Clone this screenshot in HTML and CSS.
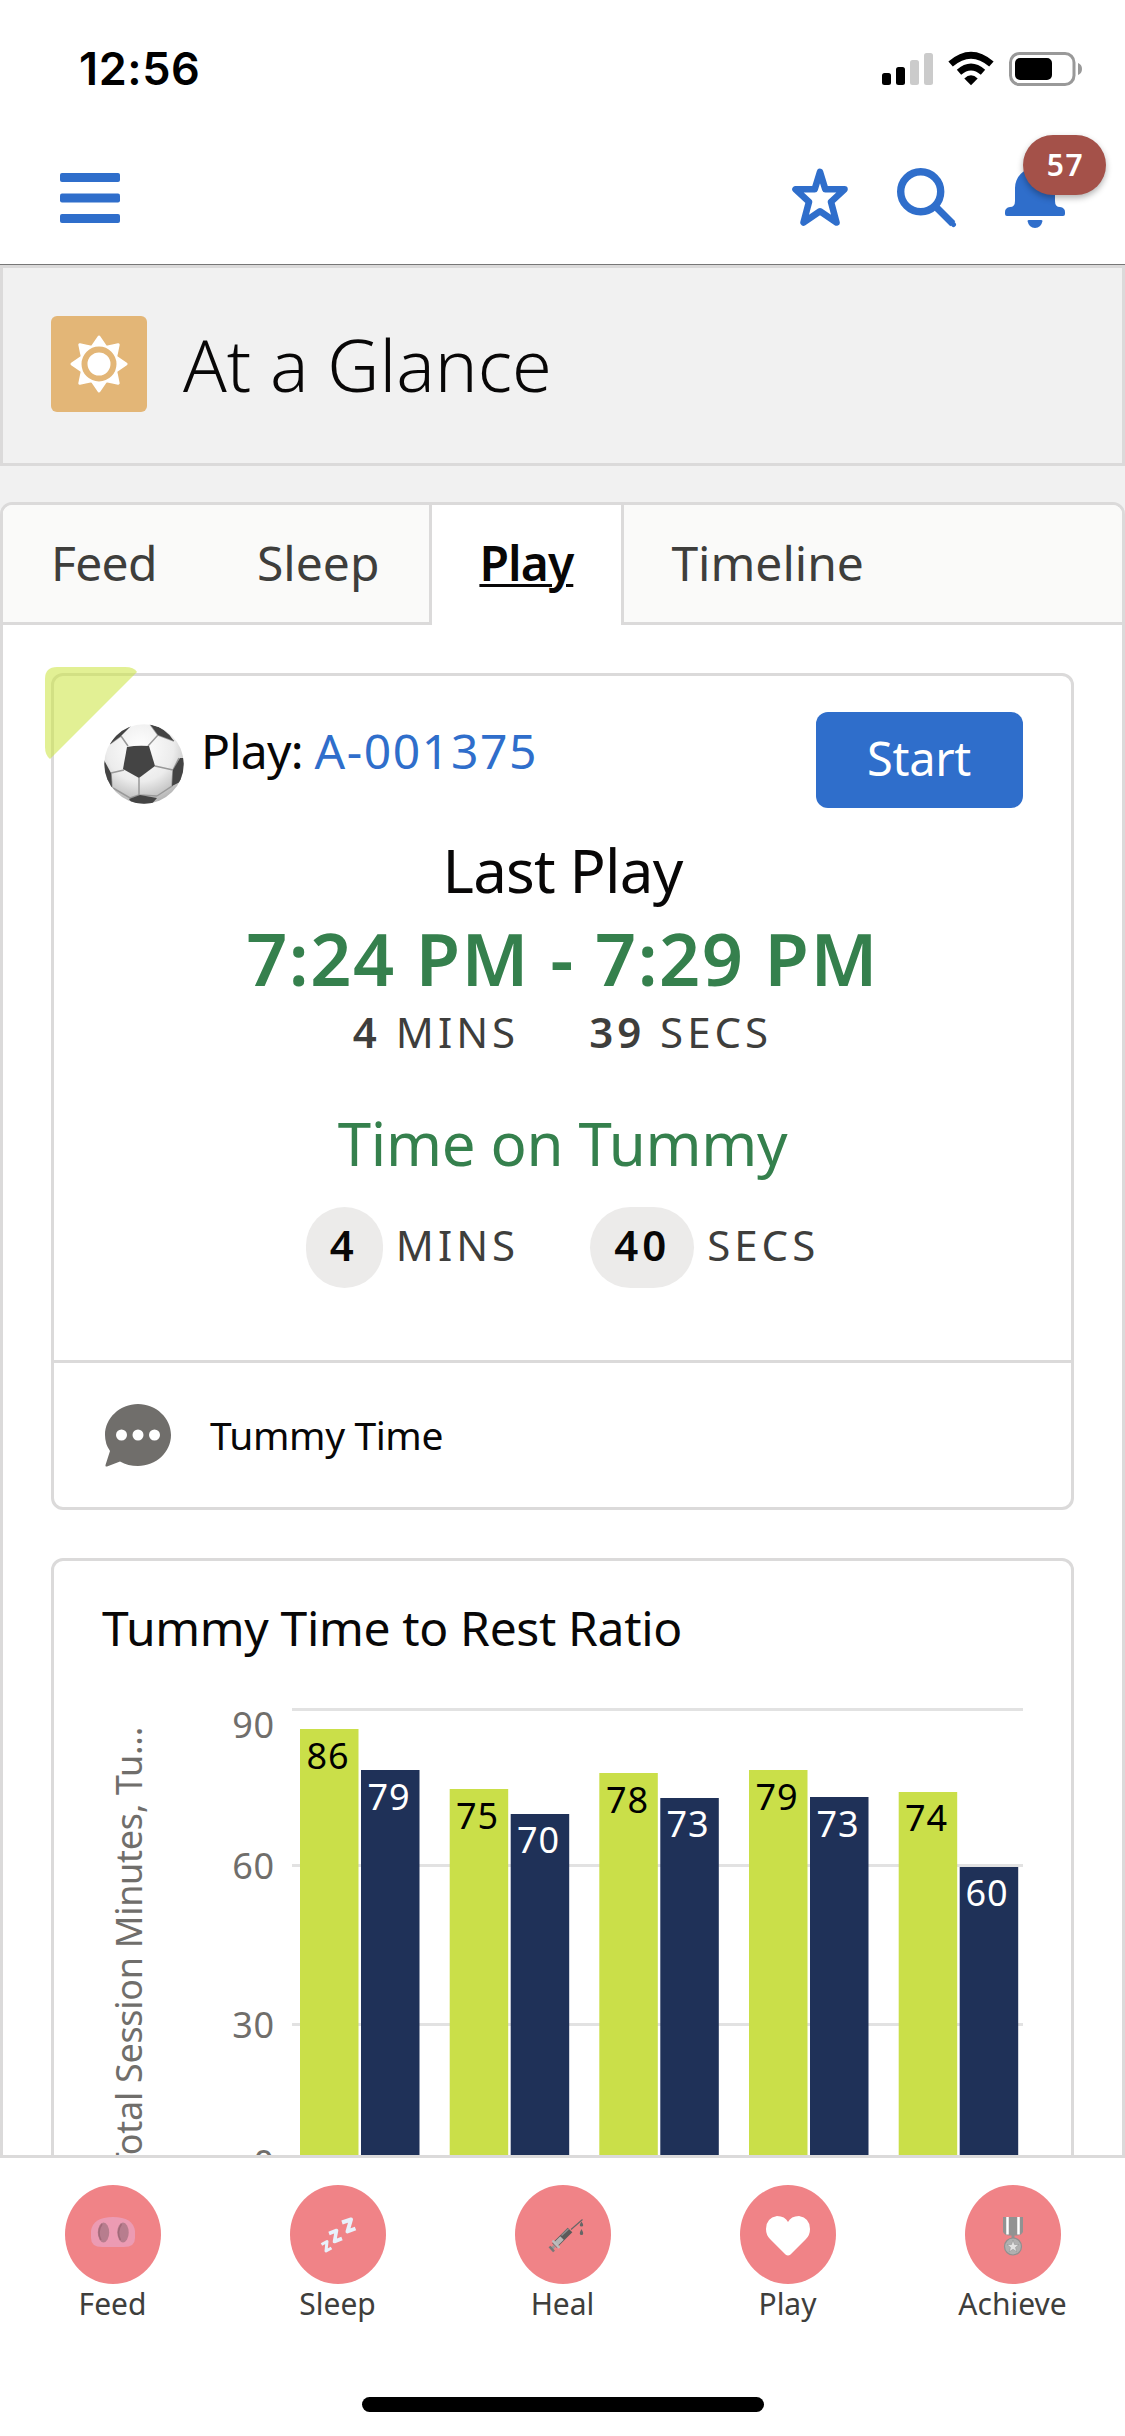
FILE: index.html
```html
<!DOCTYPE html>
<html lang="en">
<head>
<meta charset="utf-8">
<title>At a Glance</title>
<link rel="stylesheet" href="styles.css">
</head>
<body>
<div class="status">
  <span class="clock">12:56</span>
  <svg class="status-icons" width="202" height="36" viewBox="0 0 202 36">
    <rect x="1" y="22" width="9" height="12" rx="2.5"/>
    <rect x="15" y="16" width="9" height="18" rx="2.5"/>
    <g fill="#cbcbcb"><rect x="29" y="9" width="9" height="25" rx="2.5"/><rect x="43" y="2" width="9" height="32" rx="2.5"/></g>
    <path d="M90 34.2L83.3 27.4Q90 21.3 96.700 27.400Z"/>
    <path d="M78 21.300Q90 10.800 102 21.300" fill="none" stroke="#000" stroke-width="6.600"/>
    <path d="M69.600 13Q90 -4.600 110.400 13" fill="none" stroke="#000" stroke-width="6.800"/>
    <rect x="129.500" y="2.500" width="63.500" height="31" rx="9" fill="none" stroke="#999" stroke-width="3"/>
    <rect x="134" y="7" width="37" height="22" rx="5"/>
    <path d="M197 12q4 1.500 4 6t-4 6z" fill="#999"/>
  </svg>
</div>
<nav class="topbar">
  <svg width="60" height="50" viewBox="0 0 60 50" fill="#2f6ecb"><rect width="60" height="9" rx="2"/><rect y="20.500" width="60" height="9" rx="2"/><rect y="41" width="60" height="9" rx="2"/></svg>
  <div class="actions">
    <svg width="60" height="60" viewBox="0 0 60 60"><path d="M30 4L35.300 21.300L54.500 21.300L41 33.800L46.500 54.500L30 43.300L13.500 54.500L19 33.800L5.500 21.300L24.700 21.300Z" fill="none" stroke="#2f6ecb" stroke-width="6.600" stroke-linejoin="round" transform="translate(1 0)"/></svg>
    <svg width="60" height="60" viewBox="0 0 60 60" fill="none" stroke="#2f6ecb"><circle cx="23.700" cy="23.700" r="20" stroke-width="7.400"/><path d="M38 38L55.800 55.800" stroke-width="7"/><path d="M55 55L56.500 56.500" stroke-width="5" stroke-linecap="round"/></svg>
    <div class="bell">
      <svg width="60" height="60" viewBox="0 0 60 60" fill="#2f6ecb"><path d="M10 20a20 20 0 0 1 40 0V33Q50 39 55 39Q60 39.800 60 44V46Q60 48 58 48H2Q0 48 0 46V44Q0 39.800 5 39Q10 39 10 33Z"/><path d="M24 52H36Q37.500 52 37.500 53Q36 60 30 60T22.500 53Q22.500 52 24 52Z"/></svg>
      <span class="badge">57</span>
    </div>
  </div>
</nav>
<main class="content">
  <header class="page-head">
    <span class="head-icon">
      <svg width="58" height="58" viewBox="-29 -29 58 58"><path fill="#fff" stroke="#fff" stroke-width="3" stroke-linejoin="round" d="M0 -27L6.500 -17.500Q8 -16.500 10 -17.300L19.200 -19.200L17.300 -10Q16.500 -8 17.500 -6.500L27 0L17.500 6.500Q16.500 8 17.300 10L19.200 19.200L10 17.300Q8 16.500 6.500 17.500L0 27L-6.500 17.500Q-8 16.500 -10 17.300L-19.200 19.200L-17.300 10Q-16.500 8 -17.500 6.500L-27 0L-17.500 -6.500Q-16.500 -8 -17.300 -10L-19.200 -19.200L-10 -17.300Q-8 -16.500 -6.500 -17.500Z"/><circle r="14.500" fill="none" stroke="#e3b677" stroke-width="6"/></svg>
    </span>
    <h1>At a Glance</h1>
  </header>
  <section class="panel">
    <div class="tabs">
      <span class="tab feed">Feed</span><span class="tab">Sleep</span><span class="tab active">Play</span><span class="tab">Timeline</span>
    </div>
    <div class="cards">
      <article class="card play-card">
        <svg class="corner" width="92" height="92" viewBox="0 0 92 92"><path d="M0 12Q0 0 12 0H80Q89 0 92 5L5 92Q0 88 0 80Z" fill="#cce543" fill-opacity=".57"/></svg>
        <div class="play-head">
          <svg class="ball" width="80" height="80" viewBox="0 0 80 80">
            <defs><radialGradient id="shade" cx=".45" cy=".3" r=".7"><stop offset="0" stop-color="#fff"/><stop offset=".6" stop-color="#ececec"/><stop offset="1" stop-color="#b5b5b5"/></radialGradient><clipPath id="round"><circle cx="40" cy="40" r="39.700"/></clipPath></defs>
            <g clip-path="url(#round)">
              <rect width="80" height="80" fill="url(#shade)"/>
              <g fill="none" stroke="#999" stroke-width="1.500"><path d="M24 22L17 12M44 22L54 11L46 0M51 42L69 46M35 54V71M20 46L7 49M54 11L70 17M17 12L6 20M7 49L8 64M69 46L68 62L53 72M69 46L75 34M35 71L26 74L9 64M35 71L53 72"/></g>
              <g fill="#444"><path d="M23 23Q33 21 45 22L51 42L35 54L19 45Z"/><path d="M46 0Q62 4 70 17L54 11Z"/><path d="M28 1Q13 6 6 20L17 12Z"/><path d="M0 36L7 49L8 64L-2 55Z"/><path d="M76 34L69 46L68 62L82 55V34Z"/><path d="M25 75L36 71L53 74L46 82H30Z"/></g>
            </g>
          </svg>
          <span class="play-name">Play: <a>A-001375</a></span>
          <button class="start">Start</button>
        </div>
        <div class="last">Last Play</div>
        <div class="range">7:24 PM - 7:29 PM</div>
        <div class="span-row"><span><b>4</b> MINS</span><span><b>39</b> SECS</span></div>
        <div class="tummy">Time on Tummy</div>
        <div class="span-row pills"><span><b>4</b>MINS</span><span><b>40</b>SECS</span></div>
        <div class="note">
          <svg width="66" height="63" viewBox="0 0 66 63"><path fill="#706e6b" d="M33 0C51 0 66 14 66 31S51 62 33 62Q23 62 15 57.500L2 62.500Q0 63 .5 61L5 47Q0 40 0 31C0 14 15 0 33 0Z"/><g fill="#fff"><circle cx="16.500" cy="31" r="5.500"/><circle cx="33" cy="31" r="5.500"/><circle cx="49.500" cy="31" r="5.500"/></g></svg>
          <span>Tummy Time</span>
        </div>
      </article>
      <article class="card">
        <h2>Tummy Time to Rest Ratio</h2>
        <svg class="chart" width="1017" height="560" viewBox="0 0 1017 560">
          <g fill="#e2e2e2"><rect x="238" y="45" width="731" height="3"/><rect x="238" y="201" width="731" height="3"/><rect x="238" y="360" width="731" height="3"/></g>
          <g fill="#cadf49"><rect x="246" y="66" width="58.500" height="494"/><rect x="395.700" y="126" width="58.500" height="434"/><rect x="545.300" y="110" width="58.500" height="450"/><rect x="695" y="107" width="58.500" height="453"/><rect x="844.700" y="129" width="58.500" height="431"/></g>
          <g fill="#1f3158"><rect x="307" y="107" width="58.500" height="453"/><rect x="456.700" y="151" width="58.500" height="409"/><rect x="606.300" y="135" width="58.500" height="425"/><rect x="756" y="134" width="58.500" height="426"/><rect x="905.700" y="204" width="58.500" height="356"/></g>
          <g class="on-light"><text x="274" y="105.500">86</text><text x="423.500" y="165.500">75</text><text x="573.500" y="149.500">78</text><text x="723" y="146.500">79</text><text x="872.500" y="168">74</text></g>
          <g class="on-dark"><text x="335" y="146.500">79</text><text x="484.500" y="189.500">70</text><text x="634" y="174">73</text><text x="784" y="174">73</text><text x="933" y="243">60</text></g>
          <g class="axis"><text x="221" y="75">90</text><text x="221" y="216">60</text><text x="221" y="375">30</text><text x="221" y="513">0</text>
          <text class="axis-title" transform="translate(87.500 64) rotate(-90)">Total Session Minutes, Tu...</text></g>
        </svg>
      </article>
    </div>
  </section>
</main>
<footer class="dock">
  <div class="item"><i><svg width="46" height="46" viewBox="0 0 46 46"><path d="M1 19Q3 5 23 5T45 19V26Q45 35 34 35H12Q1 35 1 26Z" fill="#ec9bb3"/><ellipse cx="13.500" cy="20.500" rx="5.700" ry="10" fill="#b77d8e"/><ellipse cx="33" cy="20.500" rx="5.700" ry="10" fill="#b77d8e"/><path d="M11 28Q6.500 20 12 12M30.500 28Q26 20 31.500 12" fill="none" stroke="#a26979" stroke-width="1.500"/></svg></i><span>Feed</span></div>
  <div class="item"><i><svg width="46" height="46" viewBox="0 0 46 46" fill="none" stroke="#e8f1fb" stroke-linejoin="round"><path d="M6.500 32.500L12 29.500L11 39L16.500 36" stroke-width="3"/><path d="M14 21.500L21.500 18.500L19.500 29.500L27 26.500" stroke-width="3.600"/><path d="M27 10.500L36 7.500L32.500 19.500L40.500 16.500" stroke-width="4"/></svg></i><span>Sleep</span></div>
  <div class="item"><i><svg width="46" height="46" viewBox="0 0 46 46"><path d="M31 17.500L42.500 7.500" stroke="#666" stroke-width="1.200"/><path d="M14.500 33.500L30 18" stroke="#5a5a5a" stroke-width="6.600"/><path d="M15 33L22 26" stroke="#b5b5b5" stroke-width="5"/><path d="M21.500 23.500L28.500 16.800" stroke="#8c8c8c" stroke-width="1.600"/><path d="M12.500 28.500L19.500 36" stroke="#bdbdbd" stroke-width="2.400"/><path d="M14.500 34L11 37.500" stroke="#999" stroke-width="3"/><path d="M9.500 34.500L14 39.500" stroke="#777" stroke-width="2.600"/><path d="M41.500 9.500q3.400 5 0 5t0-5zM41.500 17q3.400 6 0 6t0-6z" fill="#666"/></svg></i><span>Heal</span></div>
  <div class="item"><i><svg width="46" height="46" viewBox="0 0 46 46"><path fill="#fff" d="M23 10Q20 4 12 4Q1 6 1 17Q1 23 5 27L20.500 42.500Q23 44.500 25.500 42.500L41 27Q45 23 45 17Q45 6 34 4Q26 4 23 10Z"/></svg></i><span>Play</span></div>
  <div class="item"><i><svg width="46" height="46" viewBox="0 0 46 46"><path fill="#929292" d="M13 5H33V20Q31 23.500 27 23.500H19Q15 23.500 13 20Z"/><path d="M17.500 5V22.500M28.500 5V22.500" stroke="#fff" stroke-width="2.500"/><rect x="21.500" y="23" width="3" height="4" fill="#929292"/><circle cx="23" cy="34.500" r="8.500" fill="#b0b0b0" stroke="#8f8f8f" stroke-width="1.200"/><path fill="#e2e2e2" stroke="#8c8c8c" stroke-width=".5" d="M23 28L24.500 32.500L29 32.600L25.500 35.400L26.700 39.800L23 37.300L19.300 39.800L20.500 35.400L17 32.600L21.500 32.500Z"/></svg></i><span>Achieve</span></div>
  <div class="home"></div>
</footer>
</body>
</html>
```
FILE: styles.css
```css
* { box-sizing: border-box; }
body {
  margin: 0;
  width: 1125px;
  height: 2436px;
  display: flex;
  flex-direction: column;
  overflow: hidden;
  background: #fff;
  color: #080707;
  font-family: "Noto Sans", "Open Sans", sans-serif;
}
svg { display: block; flex: none; }

.status {
  height: 132px;
  padding: 50px 42px 0 79px;
  display: flex;
  justify-content: space-between;
}
.clock {
  font: 600 45px/38px Inter, sans-serif;
  letter-spacing: .6px;
  color: #000;
}
.status-icons { margin-top: 1px; }

.topbar {
  height: 133px;
  padding: 36px 60px 0;
  display: flex;
  justify-content: space-between;
  border-bottom: 1px solid #777;
}
.topbar > svg { margin-top: 5px; }
.actions { display: flex; gap: 48px; }
.bell { position: relative; }
.badge {
  position: absolute;
  left: 18px;
  top: -33px;
  width: 83px;
  height: 60px;
  padding-left: 2px;
  border-radius: 30px;
  background: #a45149;
  color: #fff;
  font-size: 30px;
  font-weight: 600;
  line-height: 59px;
  letter-spacing: 1.5px;
  text-align: center;
  box-shadow: 0 3px 6px rgba(0, 0, 0, .3);
}

.content {
  height: 1890px;
  overflow: hidden;
  background: #f1f1f1;
}
.page-head {
  height: 201px;
  padding: 48px;
  display: flex;
  gap: 36px;
  border: 3px solid #dbdada;
}
.head-icon {
  width: 96px;
  height: 96px;
  border-radius: 6px;
  background: #e3b677;
  display: grid;
  place-items: center;
}
h1, h2 { margin: 0; font-weight: 400; }
h1 {
  font-size: 72px;
  font-weight: 300;
  line-height: 96px;
}

.panel {
  margin-top: 36px;
  height: 1800px;
  border: 3px solid #dbdada;
  border-radius: 12px;
  background: #fff;
}
.tabs {
  height: 120px;
  display: flex;
  background: #fafaf9;
  border-radius: 9px 9px 0 0;
  box-shadow: inset 0 -3px #dbdada;
  color: #3e3e3c;
  font-size: 48px;
  line-height: 115px;
}
.tab { padding: 0 48px; }
.tab:last-child { padding-left: 47px; }
.tab.feed { width: 206px; letter-spacing: -.7px; }
.tab.active {
  width: 195px;
  margin-left: 2px;
  padding: 0 0 0 47px;
  border: solid #dbdada;
  border-width: 0 3px;
  background: #fff;
  color: #080707;
  font-weight: 600;
  letter-spacing: -.9px;
  text-decoration: underline;
  text-decoration-thickness: 3px;
  text-underline-offset: 3px;
}

.cards {
  padding: 48px;
  display: flex;
  flex-direction: column;
  gap: 48px;
}
.card {
  width: 1023px;
  border: 3px solid #dbdada;
  border-radius: 12px;
}
.play-card { position: relative; height: 837px; }
.corner { position: absolute; left: -9px; top: -9px; }
.play-head {
  height: 149px;
  padding: 36px 48px 0 50px;
  display: flex;
  align-items: flex-start;
}
.ball { margin-top: 12px; }
.play-name {
  flex: 1;
  margin: 3px 0 0 17px;
  font-size: 48px;
  line-height: 72px;
  letter-spacing: -.8px;
}
.play-name a { color: #2f6ecb; letter-spacing: 1.600px; }
.start {
  width: 207px;
  height: 96px;
  padding: 0 1px 4px 0;
  border: 0;
  border-radius: 12px;
  background: #2f6ecb;
  color: #fff;
  font: 47px "Noto Sans", sans-serif;
  letter-spacing: -.3px;
}
.last, .range, .tummy { text-align: center; }
.last { font-size: 60px; line-height: 90px; letter-spacing: -.8px; }
.range { font-size: 72px; font-weight: 600; line-height: 86px; letter-spacing: 1.500px; color: #35804d; }
.span-row {
  display: flex;
  justify-content: center;
  gap: 70px;
  color: #3e3e3c;
  font-size: 42px;
  line-height: 62px;
  letter-spacing: 4px;
}
.span-row b { font-weight: 600; }
.tummy { margin-top: 35px; font-size: 60px; line-height: 90px; letter-spacing: -.3px; color: #35804d; }
.pills { margin-top: 19px; line-height: 75px; gap: 71px; }
.pills b {
  display: inline-block;
  height: 81px;
  padding: 0 24px 0 24px;
  margin-right: 13px;
  border-radius: 41px;
  background: #ecebea;
  color: #080707;
}
.pills span:first-child b { padding: 0 25px 0 24px; }
.note {
  margin-top: 72px;
  height: 147px;
  padding: 0 51px;
  border-top: 3px solid #dbdada;
  display: flex;
  align-items: center;
  gap: 39px;
  font-size: 39px;
  letter-spacing: -.4px;
}
.note span { padding-bottom: 2px; }

h2 {
  padding: 31px 48px 0;
  margin-bottom: -1px;
  font-size: 48px;
  line-height: 72px;
  letter-spacing: -.35px;
}
.chart { font-size: 36px; letter-spacing: .8px; }
.on-light, .on-dark { text-anchor: middle; }
.on-dark { fill: #fff; }
.axis { fill: #706e6b; text-anchor: end; }
.axis-title { letter-spacing: -.3px; }

.dock {
  height: 281px;
  border-top: 3px solid #dbdada;
  padding-top: 27px;
  display: grid;
  grid-template-columns: repeat(5, 1fr);
  grid-template-rows: 135px 77px 15px;
  text-align: center;
  color: #3e3e3c;
  font-size: 30px;
}
.item i {
  width: 96px;
  height: 99px;
  margin: 0 auto;
  padding-top: 27px;
  display: flex;
  justify-content: center;
  align-items: flex-start;
  border-radius: 50%;
  background: #f08387;
}
.item span { display: block; line-height: 39px; }
.home {
  grid-row: 3;
  grid-column: 1 / -1;
  justify-self: center;
  width: 402px;
  height: 15px;
  border-radius: 8px;
  background: #000;
}
```
